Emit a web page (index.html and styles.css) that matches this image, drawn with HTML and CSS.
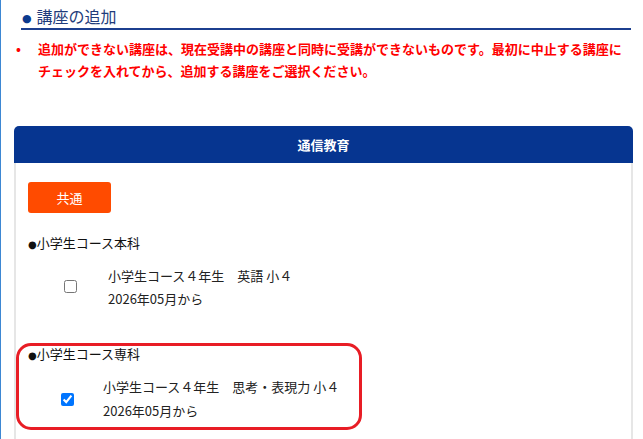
FILE: index.html
```html
<!DOCTYPE html>
<html lang="ja">
<head>
    <meta charset="UTF-8">
    <meta name="viewport" content="width=device-width, initial-scale=1.0">
    <title>講座の追加</title>
    <link rel="stylesheet" href="styles.css">
</head>
<body>
    <div class="page">
        <h2 class="page-title"><span class="title-mark">●</span>講座の追加</h2>

        <ul class="notice">
            <li>追加ができない講座は、現在受講中の講座と同時に受講ができないものです。最初に中止する講座にチェックを入れてから、追加する講座をご選択ください。</li>
        </ul>

        <div class="card">
            <div class="card-header">通信教育</div>
            <div class="card-body">
                <button class="tab-btn">共通</button>

                <!-- 本科 -->
                <div class="course-group">
                    <div class="group-title"><span class="dot">●</span>小学生コース本科</div>
                    <label class="course-item">
                        <input type="checkbox">
                        <span class="course-text">
                            <span>小学生コース４年生　英語 小４</span>
                            <span>2026年05月から</span>
                        </span>
                    </label>
                </div>

                <!-- 専科 -->
                <div class="course-group selected">
                    <div class="group-title"><span class="dot">●</span>小学生コース専科</div>
                    <label class="course-item">
                        <input type="checkbox" checked>
                        <span class="course-text">
                            <span>小学生コース４年生　思考・表現力 小４</span>
                            <span>2026年05月から</span>
                        </span>
                    </label>
                </div>
            </div>
        </div>
    </div>
</body>
</html>
```

FILE: styles.css
```css
body {
    margin: 0;
    font-family: "Noto Sans CJK JP", sans-serif;
    color: #222;
    border-left: 1px solid #3d87d3;
    min-height: 100vh;
    box-sizing: border-box;
}
.page {
    padding: 0 10px 40px 13px;
}
.page-title {
    margin: 0 2px 0 7px;
    padding: 5px 0 1px 1px;
    height: 22px;
    font-size: 16px;
    font-weight: normal;
    line-height: 22px;
    color: #1f3c7b;
    border-bottom: 2px solid #1c3f8f;
}
.title-mark {
    font-family: "DejaVu Sans", sans-serif;
    font-size: 11px;
    line-height: 10px;
    color: #0b3a8e;
    margin-right: 5px;
    vertical-align: 1px;
}
.notice {
    margin: 8px 0 0;
    padding: 0;
    list-style: none;
}
.notice li {
    display: flex;
    font-size: 13px;
    font-weight: bold;
    line-height: 22px;
    color: #ff0000;
}
.notice li::before {
    content: "•";
    flex: 0 0 24px;
    box-sizing: border-box;
    padding-left: 2px;
}
.card {
    margin-top: 44px;
}
.card-header {
    height: 37px;
    line-height: 37px;
    background-color: #063590;
    color: #fff;
    font-size: 13px;
    font-weight: bold;
    text-align: center;
    border-radius: 5px 5px 0 0;
}
.card-body {
    border-left: 2px solid #e6e6e6;
    border-right: 2px solid #e6e6e6;
    padding: 19px 12px 40px 12px;
}
.tab-btn {
    display: block;
    width: 83px;
    height: 31px;
    background-color: #ff4b00;
    color: #fff;
    border: none;
    border-radius: 3px;
    font-family: inherit;
    font-size: 13px;
    padding: 0;
}
.course-group {
    margin-top: 22px;
}
.group-title {
    font-size: 13px;
    line-height: 16px;
    height: 16px;
    color: #111;
}
.dot {
    font-family: "DejaVu Sans", sans-serif;
    font-size: 10px;
    line-height: 10px;
}
.course-item {
    display: flex;
    align-items: center;
    margin-top: 13px;
    padding-left: 36px;
    font-size: 13px;
}
.course-item input {
    width: 13px;
    height: 13px;
    margin: 0 31px 2px 0;
}
.course-text {
    display: flex;
    flex-direction: column;
    line-height: 23px;
}
.selected {
    margin: 33px 0 0 -12px;
    width: 346px;
    box-sizing: border-box;
    border: 3px solid #e81d25;
    border-radius: 15px;
    padding: 0 0 4px 9px;
}
.selected .course-item {
    padding-left: 33px;
}
.selected .course-text {
    line-height: 24px;
}
.selected .course-item input {
    margin: 0 29px 0 0;
}
```
